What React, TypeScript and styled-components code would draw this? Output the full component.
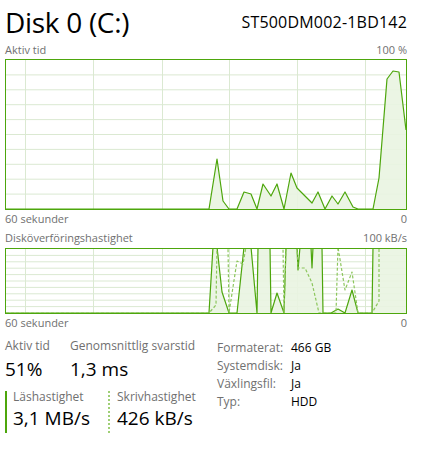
import styled, { createGlobalStyle } from "styled-components";

const GlobalStyle = createGlobalStyle`
  body {
    margin: 0;
    background: #ffffff;
    font-family: "Segoe UI", "Open Sans", "Noto Sans", sans-serif;
    color: #000;
  }
`;

const LINE = "#4da60c";
const FILL = "#e9f4e1";
const GRID = "#dbe9d2";

type Pt = [number, number];

// page coordinates, converted into the chart's own box below
const activePts: Pt[] = [
  [6, 209], [209, 209], [217, 159], [223, 201], [229, 209], [237, 209], [244, 192],
  [251, 194], [257, 209], [263, 184], [271, 196], [277, 184], [284, 209], [291, 173],
  [297, 188], [304, 195], [312, 203], [318, 192], [325, 209], [332, 196], [338, 204],
  [345, 192], [353, 207], [358, 209], [373, 209], [379, 178], [387, 79], [393, 71],
  [399, 72], [406, 130],
];

const readPts: Pt[] = [
  [6, 313], [209, 313], [213, 247], [217, 247], [222, 292], [229, 313], [237, 313],
  [244, 247], [251, 247], [257, 313], [258, 247], [270, 247], [271, 313], [277, 293],
  [284, 313], [286, 247], [297, 247], [298, 270], [300, 247], [311, 247], [312, 268],
  [313, 247], [322, 247], [323, 313], [331, 313], [338, 309], [345, 313], [352, 290],
  [358, 313], [372, 313], [373, 247], [406, 247],
];

const writePts: Pt[] = [
  [6, 313], [209, 313], [216, 305], [217, 247], [228, 247], [229, 313], [237, 261],
  [243, 264], [246, 247], [283, 247], [284, 313], [286, 247], [297, 247], [298, 268],
  [305, 268], [312, 283], [319, 313], [336, 313], [338, 247], [345, 290], [352, 272],
  [358, 313], [372, 313], [379, 301], [379, 247], [406, 247],
];

const Page = styled.div`
  width: 402px;
  padding: 0 16px 0 5px;
`;

const Header = styled.div`
  display: flex;
  justify-content: space-between;
  align-items: flex-start;
  height: 43px;
`;

const Title = styled.h1`
  margin: 0;
  padding-top: 2px;
  font-size: 28px;
  font-weight: 400;
  letter-spacing: -0.3px;
  line-height: 40px;
`;

const Model = styled.div`
  padding-top: 12px;
  font-size: 16px;
  letter-spacing: 0.2px;
  line-height: 20px;
`;

const AxisRow = styled.div<{ $top?: number }>`
  display: flex;
  justify-content: space-between;
  margin-top: ${({ $top }) => $top ?? 0}px;
  font-size: 11px;
  line-height: 14px;
  color: #707070;
`;

const ChartFrame = styled.div<{ $height: number; $top: number }>`
  box-sizing: border-box;
  height: ${({ $height }) => $height}px;
  margin-top: ${({ $top }) => $top}px;
  border: 1px solid ${LINE};
  background: #fff;
  svg {
    display: block;
  }
`;

const Stats = styled.div`
  display: flex;
  align-items: flex-start;
  margin-top: 8px;
`;

const LeftStats = styled.div`
  width: 212px;
  flex-shrink: 0;
`;

const StatRow = styled.div`
  display: flex;
`;

const Stat = styled.div<{ $width: number }>`
  width: ${({ $width }) => $width}px;
`;

const StatLabel = styled.div`
  font-size: 12px;
  line-height: 16px;
  color: #707070;
  white-space: nowrap;
`;

const StatValue = styled.div`
  margin-top: 2px;
  font-size: 19px;
  line-height: 26px;
`;

const RateRow = styled.div`
  display: flex;
  margin-top: 9px;
`;

const Rate = styled.div<{ $dotted?: boolean; $width?: number }>`
  width: ${({ $width }) => ($width ? `${$width}px` : "auto")};
  box-sizing: border-box;
  border-left: 2px ${({ $dotted }) => ($dotted ? "dotted #9fcf75" : `solid ${LINE}`)};
  padding-left: ${({ $dotted }) => ($dotted ? 7 : 6)}px;
`;

const RateLabel = styled(StatLabel)`
  line-height: 12px;
`;

const RateValue = styled.div`
  font-size: 19px;
  line-height: 30px;
`;

const Props = styled.div`
  display: grid;
  grid-template-columns: 74px max-content;
  align-content: start;
  margin-top: 1px;
  font-size: 12px;
  line-height: 18px;
`;

const PropName = styled.div`
  color: #707070;
`;

const PropValue = styled.div``;

type Series = { pts: Pt[]; dashed?: boolean; fill?: boolean; color: string };

function Chart({
  height,
  top,
  offsetY,
  series,
}: {
  height: number;
  top: number;
  offsetY: number;
  series: Series[];
}) {
  const w = 400;
  const h = height - 2;
  const vLines = [19, 87, 156, 223, 291, 359];
  const hLines = Array.from({ length: 9 }, (_, i) => ((i + 1) * h) / 10);
  const local = (pts: Pt[]) => pts.map(([x, y]) => `${x - 6},${y - offsetY}`).join(" ");
  return (
    <ChartFrame $height={height} $top={top}>
      <svg width={w} height={h} viewBox={`0 0 ${w} ${h}`}>
        {vLines.map((x) => (
          <line key={`v${x}`} x1={x + 0.5} x2={x + 0.5} y1={0} y2={h} stroke={GRID} strokeWidth={1} />
        ))}
        {hLines.map((y) => (
          <line key={`h${y}`} x1={0} x2={w} y1={y} y2={y} stroke={GRID} strokeWidth={1} />
        ))}
        {series
          .filter((s) => s.fill)
          .map((s, i) => (
            <polygon
              key={`f${i}`}
              points={`${local(s.pts)} ${w},${h + 1} 0,${h + 1}`}
              fill={FILL}
              fillOpacity={0.9}
            />
          ))}
        {series.map((s, i) => (
          <polyline
            key={`l${i}`}
            points={local(s.pts)}
            fill="none"
            stroke={s.color}
            strokeWidth={1.2}
            strokeDasharray={s.dashed ? "3 2" : undefined}
            strokeLinejoin="round"
          />
        ))}
      </svg>
    </ChartFrame>
  );
}

export default function App() {
  return (
    <Page>
      <GlobalStyle />
      <Header>
        <Title>Disk 0 (C:)</Title>
        <Model>ST500DM002-1BD142</Model>
      </Header>

      <AxisRow>
        <span>Aktiv tid</span>
        <span>100 %</span>
      </AxisRow>
      <Chart
        height={151}
        top={2}
        offsetY={60}
        series={[{ pts: activePts, fill: true, color: LINE }]}
      />
      <AxisRow $top={2}>
        <span>60 sekunder</span>
        <span>0</span>
      </AxisRow>

      <AxisRow $top={5}>
        <span>Disköverföringshastighet</span>
        <span>100 kB/s</span>
      </AxisRow>
      <Chart
        height={66}
        top={3}
        offsetY={249}
        series={[
          { pts: readPts, fill: true, color: LINE },
          { pts: writePts, dashed: true, color: "#8cc65c" },
        ]}
      />
      <AxisRow $top={2}>
        <span>60 sekunder</span>
        <span>0</span>
      </AxisRow>

      <Stats>
        <LeftStats>
          <StatRow>
            <Stat $width={65}>
              <StatLabel>Aktiv tid</StatLabel>
              <StatValue>51%</StatValue>
            </Stat>
            <Stat $width={140}>
              <StatLabel>Genomsnittlig svarstid</StatLabel>
              <StatValue>1,3 ms</StatValue>
            </Stat>
          </StatRow>
          <RateRow>
            <Rate $width={103}>
              <RateLabel>Läshastighet</RateLabel>
              <RateValue>3,1 MB/s</RateValue>
            </Rate>
            <Rate $dotted>
              <RateLabel>Skrivhastighet</RateLabel>
              <RateValue>426 kB/s</RateValue>
            </Rate>
          </RateRow>
        </LeftStats>
        <Props>
          <PropName>Formaterat:</PropName>
          <PropValue>466 GB</PropValue>
          <PropName>Systemdisk:</PropName>
          <PropValue>Ja</PropValue>
          <PropName>Växlingsfil:</PropName>
          <PropValue>Ja</PropValue>
          <PropName>Typ:</PropName>
          <PropValue>HDD</PropValue>
        </Props>
      </Stats>
    </Page>
  );
}
